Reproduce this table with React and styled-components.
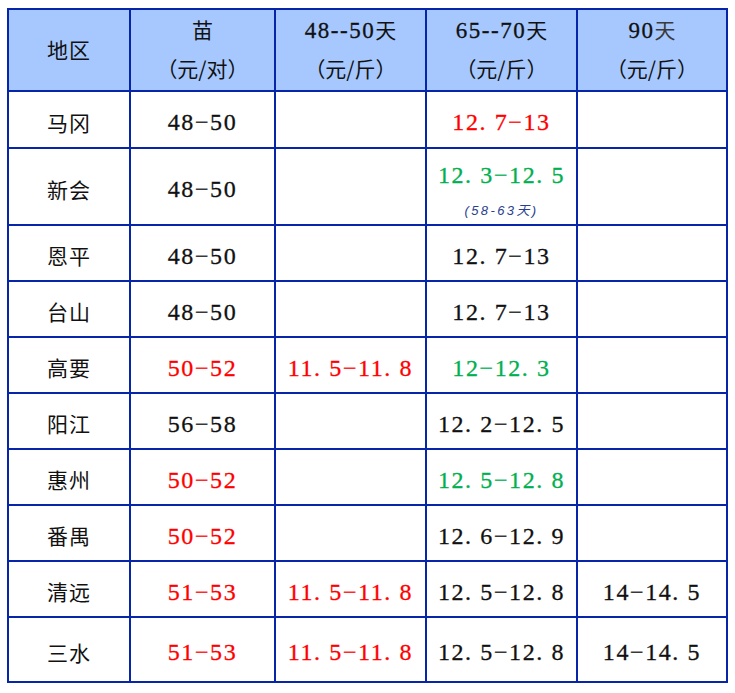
import React from "react";
import styled, { createGlobalStyle } from "styled-components";

const Global = createGlobalStyle`
  html, body { margin: 0; padding: 0; background: #ffffff; }
  body { font-family: "Liberation Serif", "Noto Sans CJK SC", serif; }
`;

const LINE = "#0625a8";

const Page = styled.div`
  padding: 8px 0 0 7px;
`;

const Table = styled.table`
  border-collapse: separate;
  border-spacing: 0;
  table-layout: fixed;
  width: 721px;
  border-top: 2px solid ${LINE};
  border-left: 2px solid ${LINE};
`;

const Col = styled.col`
  width: ${(p) => p.$w}px;
`;

const Row = styled.tr`
  height: ${(p) => p.$h}px;
`;

const Cell = styled.td`
  box-sizing: border-box;
  border-right: 2px solid ${LINE};
  border-bottom: 2px solid ${LINE};
  background: ${(p) => (p.$head ? "#a6c8ff" : "#ffffff")};
  text-align: center;
  vertical-align: middle;
  padding: ${(p) => (p.$head ? "0 0 2px" : "5px 0 0")};
  font-family: "Liberation Serif", "Noto Sans CJK SC", serif;
  font-size: 24px;
  letter-spacing: 1.6px;
  color: ${(p) => p.$color || "#111111"};
  -webkit-text-stroke: 0.3px ${(p) => p.$color || "#111111"};
  line-height: 28px;
  white-space: nowrap;
`;

const Region = styled.span`
  font-family: "Noto Sans CJK SC", sans-serif;
  font-size: 21px;
  letter-spacing: 1px;
  color: #111111;
  -webkit-text-stroke: 0;
`;

const HeadLine = styled.div`
  height: 39px;
  line-height: 39px;
  font-size: 23px;
  letter-spacing: 1.5px;
  color: #111111;
`;

const Han = styled.span`
  font-family: "Noto Sans CJK SC", sans-serif;
  font-size: 21px;
  letter-spacing: 0;
  -webkit-text-stroke: 0;
  color: ${(p) => (p.$muted ? "#3a3a3a" : "inherit")};
`;

const Note = styled.div`
  margin-top: 15px;
  font-family: "Liberation Sans", "Noto Sans CJK SC", sans-serif;
  font-style: italic;
  font-size: 13px;
  letter-spacing: 2.4px;
  line-height: 14px;
  color: #2a3f8f;
  -webkit-text-stroke: 0;
`;

const RED = "#ff0000";
const GREEN = "#00b050";

const rows = [
  { h: 57, name: "马冈", a: ["48-50"], b: null, c: ["12.7-13", RED], d: null },
  { h: 77, name: "新会", a: ["48-50"], b: null, c: ["12.3-12.5", GREEN], note: "(58-63天)", d: null },
  { h: 56, name: "恩平", a: ["48-50"], b: null, c: ["12.7-13"], d: null },
  { h: 56, name: "台山", a: ["48-50"], b: null, c: ["12.7-13"], d: null },
  { h: 56, name: "高要", a: ["50-52", RED], b: ["11.5-11.8", RED], c: ["12-12.3", GREEN], d: null },
  { h: 56, name: "阳江", a: ["56-58"], b: null, c: ["12.2-12.5"], d: null },
  { h: 56, name: "惠州", a: ["50-52", RED], b: null, c: ["12.5-12.8", GREEN], d: null },
  { h: 56, name: "番禺", a: ["50-52", RED], b: null, c: ["12.6-12.9"], d: null },
  { h: 56, name: "清远", a: ["51-53", RED], b: ["11.5-11.8", RED], c: ["12.5-12.8"], d: ["14-14.5"] },
  { h: 65, name: "三水", a: ["51-53", RED], b: ["11.5-11.8", RED], c: ["12.5-12.8"], d: ["14-14.5"] },
];

const fmt = (s) => s.replace(/\./g, ". ").replace(/-/g, "\u2212");

const Value = ({ v, children }) => (
  <Cell $color={v ? v[1] : undefined}>
    {v ? fmt(v[0]) : ""}
    {children}
  </Cell>
);

export default function App() {
  return (
    <>
      <Global />
      <Page>
        <Table>
          <colgroup>
            <Col $w={122} />
            <Col $w={145} />
            <Col $w={151} />
            <Col $w={151} />
            <Col $w={150} />
          </colgroup>
          <thead>
            <Row $h={82}>
              <Cell $head>
                <Region>地区</Region>
              </Cell>
              <Cell $head>
                <HeadLine><Han>苗</Han></HeadLine>
                <HeadLine><Han>（元/对）</Han></HeadLine>
              </Cell>
              <Cell $head>
                <HeadLine>48--50<Han>天</Han></HeadLine>
                <HeadLine><Han>（元/斤）</Han></HeadLine>
              </Cell>
              <Cell $head>
                <HeadLine>65--70<Han>天</Han></HeadLine>
                <HeadLine><Han>（元/斤）</Han></HeadLine>
              </Cell>
              <Cell $head>
                <HeadLine>90<Han $muted>天</Han></HeadLine>
                <HeadLine><Han>（元/斤）</Han></HeadLine>
              </Cell>
            </Row>
          </thead>
          <tbody>
            {rows.map((r) => (
              <Row key={r.name} $h={r.h}>
                <Cell>
                  <Region>{r.name}</Region>
                </Cell>
                <Value v={r.a} />
                <Value v={r.b} />
                <Value v={r.c}>{r.note && <Note>{r.note}</Note>}</Value>
                <Value v={r.d} />
              </Row>
            ))}
          </tbody>
        </Table>
      </Page>
    </>
  );
}
